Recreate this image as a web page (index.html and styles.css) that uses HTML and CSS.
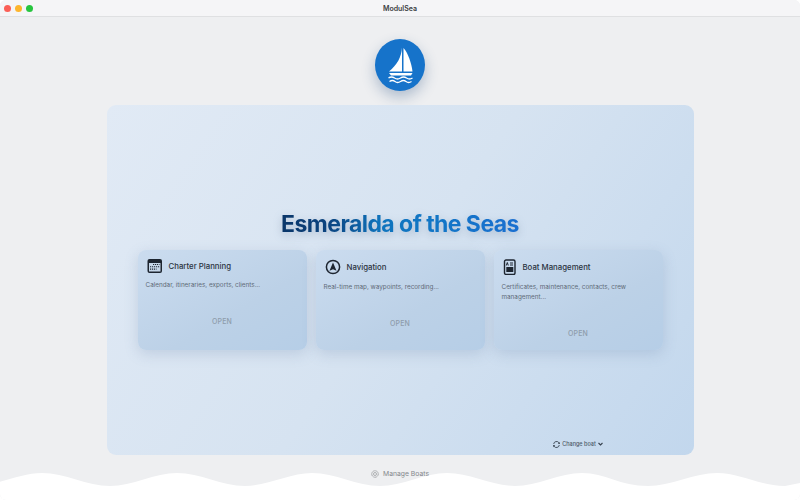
FILE: index.html
```html
<!DOCTYPE html>
<html lang="en">
<head>
    <meta charset="UTF-8">
    <title>ModulSea</title>
    <link rel="stylesheet" href="styles.css">
</head>
<body>
    <header class="titlebar">
        <div class="lights">
            <span class="light red"></span>
            <span class="light yellow"></span>
            <span class="light green"></span>
        </div>
        <div class="window-title">ModulSea</div>
    </header>

    <main class="content">
        <div class="logo">
            <svg width="50" height="50" viewBox="0 0 50 50">
                <path fill="#fff" d="M27 8.500C26.500 18 22 26 14 32.500L27 32.500Z"/>
                <path fill="#fff" d="M28.500 9C33 14 36.500 24 37.500 32.500L28.500 32.500Z"/>
                <path fill="#fff" d="M14 34H37.500L36 36.500H16Z"/>
                <path fill="none" stroke="#fff" stroke-width="1.300" d="M13.500 39q3-2 6 0t6 0t6 0t6 0"/>
                <path fill="none" stroke="#fff" stroke-width="1.300" d="M14.500 42.500q3-2 5.500 0t5.500 0t5.500 0t5.500 0"/>
            </svg>
        </div>

        <section class="panel">
            <h1 class="boat-name">Esmeralda of the Seas</h1>
            <div class="cards">
                <article class="card">
                    <div class="card-head">
                        <svg width="16" height="14" viewBox="0 0 16 14">
                            <rect x="0.500" y="0" width="14.500" height="14" rx="2" fill="#1d2530"/>
                            <rect x="2" y="4" width="11.500" height="8.500" fill="#c5d6e8"/>
                            <path stroke="#1d2530" stroke-width="1.100" stroke-dasharray="1.200 .8" d="M6 5.500h6.500M3 7.800h9.500M3 10.100h6.500"/>
                        </svg>
                        <h2>Charter Planning</h2>
                    </div>
                    <p class="card-text">Calendar, itineraries, exports, clients...</p>
                    <div class="open">OPEN</div>
                </article>
                <article class="card">
                    <div class="card-head">
                        <svg width="16" height="16" viewBox="0 0 16 16">
                            <circle cx="8" cy="8" r="6.600" fill="none" stroke="#1d2530" stroke-width="1.500"/>
                            <path fill="#1d2530" d="M8 3.500L11.500 11.800L8 10.200L4.500 11.800Z"/>
                        </svg>
                        <h2>Navigation</h2>
                    </div>
                    <p class="card-text">Real-time map, waypoints, recording...</p>
                    <div class="open">OPEN</div>
                </article>
                <article class="card">
                    <div class="card-head">
                        <svg width="14" height="16" viewBox="0 0 14 16">
                            <rect x="1.500" y="1" width="10.500" height="14.500" rx="1.500" fill="none" stroke="#1d2530" stroke-width="1.400"/>
                            <path stroke="#1d2530" fill="none" stroke-width="1" d="M3.300 6.500L4.300 3.500L5.300 6.500M7 4h3M7 6h3"/>
                            <rect x="3.300" y="8" width="7" height="5" fill="#1d2530"/>
                        </svg>
                        <h2>Boat Management</h2>
                    </div>
                    <p class="card-text">Certificates, maintenance, contacts, crew management...</p>
                    <div class="open">OPEN</div>
                </article>
            </div>
            <div class="panel-foot">
                <div class="change-boat">
                    <svg width="7" height="7" viewBox="0 0 8 8">
                        <path fill="none" stroke="#36414e" stroke-width="1" d="M.8 3.400A3.300 3.300 0 0 1 6.800 2M7.200 4.600A3.300 3.300 0 0 1 1.200 6"/>
                        <path fill="#36414e" d="M7.800 1V3.300H5.500ZM.2 7V4.700H2.500Z"/>
                    </svg>
                    <span>Change boat</span>
                    <svg width="5" height="4" viewBox="0 0 5 4">
                        <path fill="none" stroke="#36414e" stroke-width="1.100" d="M.5 1L2.500 3L4.500 1"/>
                    </svg>
                </div>
            </div>
        </section>

        <div class="manage">
            <svg width="8" height="8" viewBox="0 0 16 16">
                <circle cx="8" cy="8" r="6.500" fill="none" stroke="#8b8e92" stroke-width="1.600" stroke-dasharray="2 .6"/>
                <circle cx="8" cy="8" r="3" fill="none" stroke="#8b8e92" stroke-width="1.300"/>
            </svg>
            <span>Manage Boats</span>
        </div>
    </main>

    <!-- waves along the bottom of the window -->
    <svg class="waves" width="800" height="28" viewBox="0 0 800 28">
        <path fill="#fff" d="M-26 14C-4 14 20 1 42 1C65 1 87 14 110 14C132 14 155 1 177 1C200 1 222 14 245 14C267 14 290 1 312 1C335 1 357 14 380 14C402 14 425 1 447 1C470 1 492 14 515 14C537 14 560 1 582 1C605 1 620 14 648 14C670 14 695 1 717 1C740 1 760 14 785 14L810 9V28H-26Z"/>
    </svg>
</body>
</html>
```

FILE: styles.css
```css
* {
    margin: 0;
    padding: 0;
    box-sizing: border-box;
}

html {
    background-color: #fff;
}

body {
    width: 800px;
    height: 500px;
    overflow: hidden;
    position: relative;
    border-radius: 6px;
    background-color: #eeeff1;
    font-family: "Inter", "Liberation Sans", sans-serif;
    color: #1d2530;
}

.titlebar {
    height: 17px;
    display: flex;
    align-items: center;
    justify-content: center;
    position: relative;
    background-color: #f5f5f7;
    border-bottom: 1px solid #dfe0e2;
}

.lights {
    position: absolute;
    left: 4px;
    top: 5px;
    display: flex;
    gap: 4px;
}

.light {
    width: 7px;
    height: 7px;
    border-radius: 50%;
}

.red { background-color: #fb5f57; }
.yellow { background-color: #fdb52e; }
.green { background-color: #27c53f; }

.window-title {
    font-size: 7px;
    font-weight: 600;
    color: #3c3e42;
}

.content {
    display: flex;
    flex-direction: column;
    align-items: center;
    padding-top: 22px;
    position: relative;
    z-index: 1;
}

.logo {
    width: 50px;
    height: 52px;
    border-radius: 50%;
    background: #1673ca;
    box-shadow: 0 6px 14px rgba(40, 80, 130, 0.32);
    margin-bottom: 14px;
}

.panel {
    width: 587px;
    height: 350px;
    padding: 105px 31px 0;
    display: flex;
    flex-direction: column;
    border-radius: 9px;
    background: linear-gradient(125deg, #e1eaf5 0%, #d6e3f1 50%, #c2d7ed 100%);
}

.boat-name {
    width: fit-content;
    align-self: center;
    font-size: 23px;
    line-height: 29px;
    font-weight: 700;
    letter-spacing: -0.55px;
    margin-bottom: 11px;
    background: linear-gradient(90deg, #0a3669 0%, #0b4480 20%, #0f74bd 42%, #1276c6 65%, #1a6fd0 100%);
    background-clip: text;
    -webkit-background-clip: text;
    color: transparent;
    filter: drop-shadow(0 3px 4px rgba(50, 80, 120, 0.28));
}

.cards {
    display: grid;
    grid-template-columns: repeat(3, 1fr);
    gap: 9px;
}

.card {
    height: 100px;
    padding: 9px 8px;
    border-radius: 8px;
    background: linear-gradient(150deg, #cbdcef 0%, #bcd1e7 60%, #b6cee7 100%);
    box-shadow: 0 4px 14px rgba(90, 120, 160, 0.22);
}

.card-head {
    display: flex;
    align-items: center;
    gap: 6px;
    margin-left: 1px;
}

.card-head svg {
    display: block;
    flex-shrink: 0;
}

.card-head h2 {
    font-size: 7.800px;
    font-weight: 500;
    color: #2a3340;
}

.card-text {
    margin-top: 8px;
    font-size: 6.350px;
    line-height: 9.500px;
    color: #5f6b78;
}

.open {
    margin-top: 26.500px;
    font-size: 7px;
    line-height: 10px;
    font-weight: 500;
    letter-spacing: 0.2px;
    text-align: center;
    color: #8e9cab;
}

.panel-foot {
    margin-top: auto;
    padding-bottom: 7px;
    display: grid;
    grid-template-columns: repeat(3, 1fr);
    gap: 9px;
}

.change-boat {
    grid-column: 3;
    display: flex;
    align-items: center;
    justify-content: center;
    gap: 2px;
    font-size: 5.500px;
    line-height: 8px;
    font-weight: 500;
    color: #4d5a69;
}

.manage {
    margin-top: 14px;
    display: flex;
    align-items: center;
    gap: 4px;
    font-size: 6.800px;
    line-height: 10px;
    color: #85888c;
}

.waves {
    position: absolute;
    left: 0;
    bottom: 0;
    display: block;
}
```
